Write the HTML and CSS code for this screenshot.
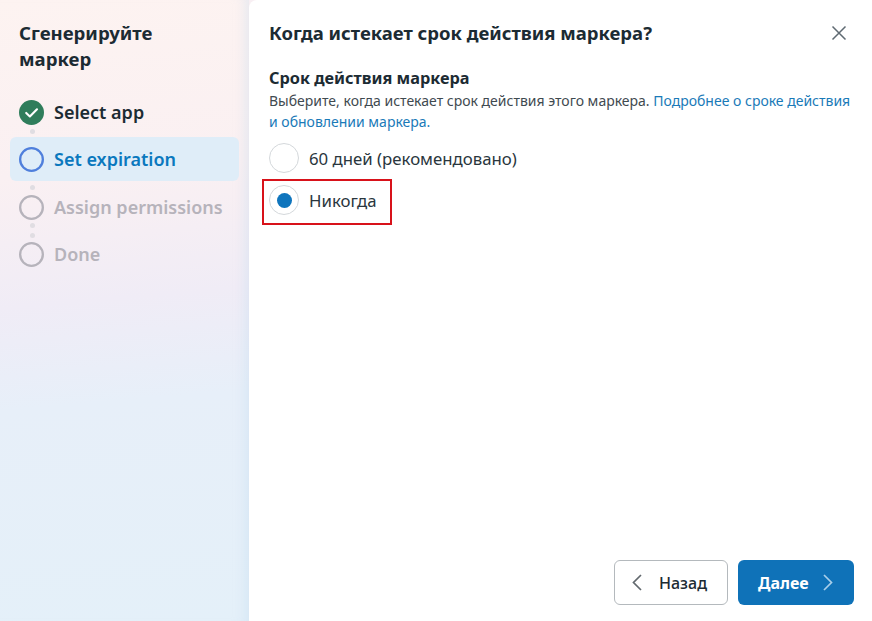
FILE: index.html
```html
<!DOCTYPE html>
<html lang="ru">
<head>
<meta charset="utf-8">
<title>Сгенерируйте маркер</title>
<link rel="stylesheet" href="styles.css">
</head>
<body>
<div class="dialog">
  <aside class="side">
    <h2 class="side-title">Сгенерируйте маркер</h2>
    <ol class="steps">
      <li class="step done">
        <svg class="ico" width="25" height="25" viewBox="0 0 26 26"><circle cx="13" cy="13" r="13" fill="#2f7d5b"/><path d="M7.500 13.500l3.800 3.600 7.400-7.400" fill="none" stroke="#fff" stroke-width="2.2" stroke-linecap="round" stroke-linejoin="round"/></svg>
        <span>Select app</span>
      </li>
      <li class="dots d1"><i></i></li>
      <li class="step active">
        <svg class="ico" width="25" height="25" viewBox="0 0 26 26"><circle cx="13" cy="13" r="11.8" fill="none" stroke="#4f7fdc" stroke-width="2.4"/></svg>
        <span>Set expiration</span>
      </li>
      <li class="dots d2"><i></i></li>
      <li class="step todo">
        <svg class="ico" width="25" height="25" viewBox="0 0 26 26"><circle cx="13" cy="13" r="11.8" fill="none" stroke="#b6b3bb" stroke-width="2.4"/></svg>
        <span>Assign permissions</span>
      </li>
      <li class="dots d3"><i></i><i></i></li>
      <li class="step todo">
        <svg class="ico" width="25" height="25" viewBox="0 0 26 26"><circle cx="13" cy="13" r="11.8" fill="none" stroke="#b6b3bb" stroke-width="2.4"/></svg>
        <span>Done</span>
      </li>
    </ol>
  </aside>
  <main class="main">
    <header class="head">
      <h1 class="title">Когда истекает срок действия маркера?</h1>
      <svg class="close" width="16" height="16" viewBox="0 0 16 16"><path d="M1.500 1.500l13 13M14.500 1.500l-13 13" fill="none" stroke="#5f6a72" stroke-width="1.5"/></svg>
    </header>
    <h3 class="label">Срок действия маркера</h3>
    <p class="desc">Выберите, когда истекает срок действия этого маркера. <a href="#">Подробнее о сроке действия и обновлении маркера.</a></p>
    <div class="options">
      <div class="option"><span class="radio"></span><span>60 дней (рекомендовано)</span></div>
      <div class="option picked"><span class="radio on"></span><span>Никогда</span></div>
    </div>
    <footer class="foot">
      <button class="btn back" type="button">
        <svg width="10" height="17" viewBox="0 0 10 17"><path d="M9 1L1.500 8.500 9 16" fill="none" stroke="#62696e" stroke-width="1.7"/></svg>
        <span>Назад</span>
      </button>
      <button class="btn next" type="button">
        <span>Далее</span>
        <svg width="10" height="17" viewBox="0 0 10 17"><path d="M1 1l7.500 7.500L1 16" fill="none" stroke="#a9cfea" stroke-width="1.7"/></svg>
      </button>
    </footer>
  </main>
</div>
</body>
</html>
```
FILE: styles.css
```css
*, *::before, *::after { box-sizing: border-box; }
html, body { margin: 0; height: 100%; }
body {
  font-family: "Noto Sans", "Open Sans", sans-serif;
  color: #1c2b33;
  overflow: hidden;
}
.dialog {
  display: flex;
  width: 872px;
  height: 621px;
  background: #f8eff3;
}
.side {
  flex: 0 0 249px;
  padding: 20px 10px 0;
  background: linear-gradient(175deg, #fdf3f1 0%, #faf0f2 28%, #f0ecf6 48%, #e7eff9 64%, #e4f0f9 100%);
  box-shadow: inset -14px 0 12px -10px rgba(190, 215, 238, 0.35);
}
.side-title {
  margin: 0 0 27px 9px;
  font-size: 18.6px;
  line-height: 26px;
  font-weight: 700;
  width: 170px;
}
.steps { list-style: none; margin: 0; padding: 0; }
.step {
  display: flex;
  align-items: center;
  gap: 10px;
  height: 44px;
  padding-left: 9px;
  border-radius: 6px;
  font-size: 18px;
  font-weight: 600;
}
.ico { flex: none; }
.step.done { height: 26px; }
.step.active { background: #dfedf8; color: #0a78be; }
.step.todo { color: #b6b3bb; height: 26px; }
.dots { display: flex; flex-direction: column; align-items: center; gap: 5px; width: 8px; margin-left: 18px; }
.dots i { display: block; width: 5px; height: 5px; border-radius: 50%; background: #e0dde2; }
.d1 { height: 12px; padding-top: 4px; }
.d2 { height: 13px; padding-top: 4px; }
.d3 { height: 21px; padding-top: 3px; }
.main {
  flex: 1;
  display: flex;
  flex-direction: column;
  background: #fff;
  border-radius: 8px 0 0 0;
  padding: 20px 18px 16px 20px;
}
.head { display: flex; justify-content: space-between; align-items: center; padding-right: 7px; }
.title { margin: 0; font-size: 18.5px; line-height: 26px; font-weight: 700; }
.label { margin: 20px 0 0; font-size: 16.3px; line-height: 24px; font-weight: 700; }
.desc { margin: 0; font-size: 14px; line-height: 21px; color: #3f4a50; }
.desc a { color: #1a7ab8; text-decoration: none; }
.options { margin-top: 5px; }
.option { display: flex; align-items: center; gap: 10px; height: 42px; font-size: 16.8px; color: #2a363d; position: relative; }
.option.picked::after {
  content: "";
  position: absolute;
  left: -7px;
  top: 0;
  width: 130px;
  height: 46px;
  border: 2px solid #d8121a;
}
.radio { width: 30px; height: 30px; border-radius: 50%; border: 1px solid #d4d8db; background: #fff; display: flex; align-items: center; justify-content: center; }
.radio.on::before { content: ""; width: 15px; height: 15px; border-radius: 50%; background: #0f75bd; }
.foot { margin-top: auto; display: flex; justify-content: flex-end; gap: 10px; }
.btn {
  height: 45px;
  border-radius: 6px;
  font-family: inherit;
  font-size: 16px;
  font-weight: 600;
  display: flex;
  align-items: center;
  padding: 0;
}
.back { width: 114px; background: #fff; border: 1px solid #b4b9bd; color: #1c2b33; gap: 17px; padding-left: 17px; font-weight: 500; }
.next { width: 116px; background: #0f72b8; border: 0; color: #fff; gap: 14px; padding-left: 20px; font-weight: 700; }
```
